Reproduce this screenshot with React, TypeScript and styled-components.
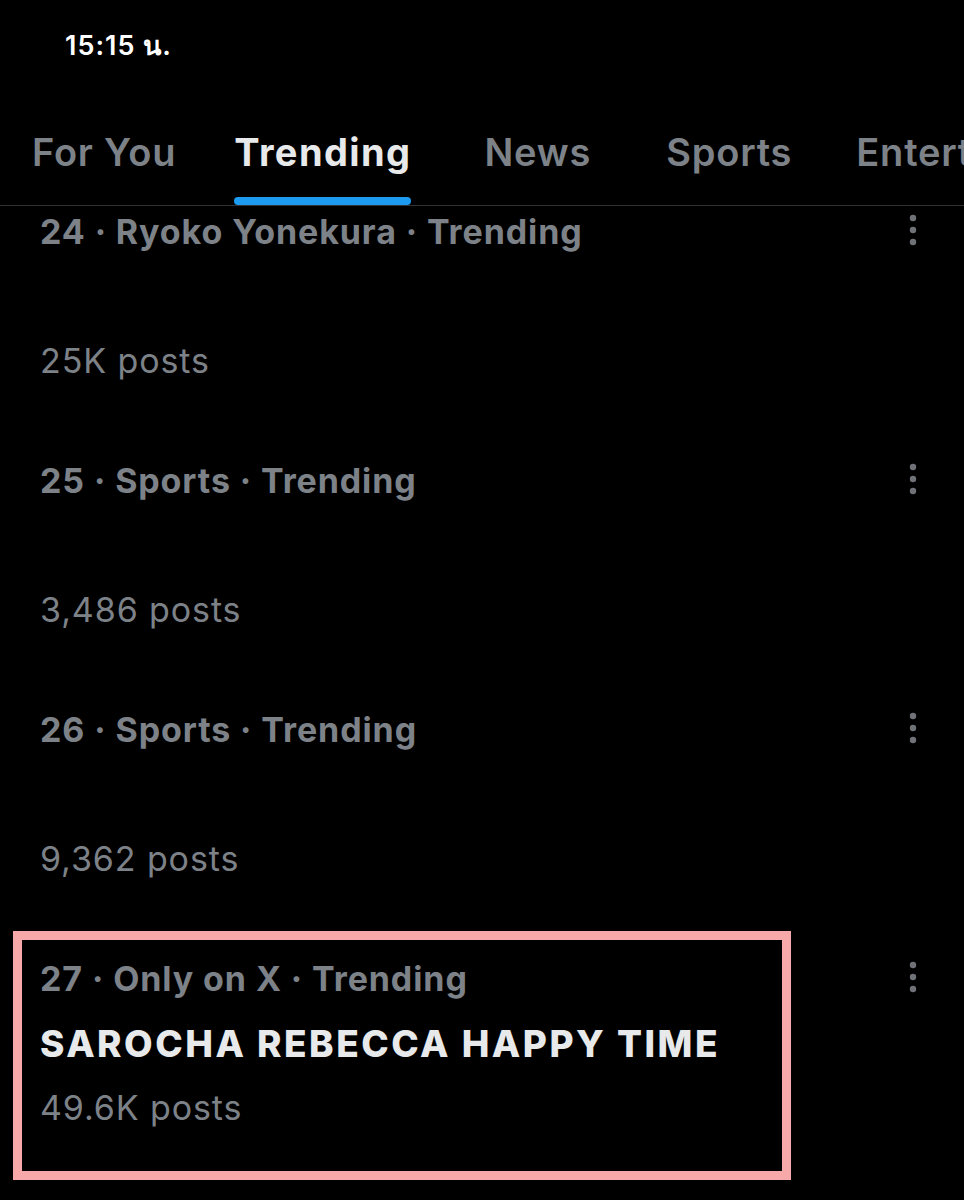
import styled, { createGlobalStyle } from "styled-components";

const GlobalStyle = createGlobalStyle`
  html, body {
    margin: 0;
    padding: 0;
    background: #000;
  }
  body {
    font-family: Inter, "Noto Sans", "Liberation Sans", sans-serif;
    color: #e7e9ea;
  }
`;

const Screen = styled.div`
  width: 964px;
  height: 1200px;
  background: #000;
  overflow: hidden;
`;

const StatusBar = styled.div`
  height: 90px;
  display: flex;
  align-items: center;
  padding-left: 65px;
  font-size: 27px;
  font-weight: 600;
  letter-spacing: 1px;
  color: #fff;
`;

const TabBar = styled.nav`
  height: 115px;
  display: flex;
  align-items: stretch;
  padding-left: 32px;
  border-bottom: 1px solid #2f3336;
  overflow: hidden;
  white-space: nowrap;
`;

const Tab = styled.div<{ $active?: boolean; $gap: number }>`
  position: relative;
  display: flex;
  align-items: center;
  margin-left: ${(p) => p.$gap}px;
  padding-top: 8px;
  font-size: 38px;
  font-weight: ${(p) => (p.$active ? 700 : 600)};
  color: ${(p) => (p.$active ? "#e7e9ea" : "#7d8288")};
  letter-spacing: ${(p) => (p.$active ? 1.4 : 0.8)}px;
`;

const Indicator = styled.span`
  position: absolute;
  left: 0;
  right: 0;
  bottom: 0;
  height: 8px;
  border-radius: 4px;
  background: #1d9bf0;
`;

const List = styled.div`
  display: flex;
  flex-direction: column;
`;

const Row = styled.div`
  position: relative;
  display: flex;
  justify-content: space-between;
  height: 249px;
  padding: 0 47px 0 40px;
  box-sizing: border-box;
`;

const Content = styled.div`
  display: flex;
  flex-direction: column;
  white-space: nowrap;
`;

const Meta = styled.div`
  height: 52px;
  line-height: 52px;
  font-size: 34px;
  font-weight: 700;
  letter-spacing: 0.9px;
  color: #7d8288;
`;

const Title = styled.div`
  height: 64px;
  line-height: 64px;
  margin-top: 7px;
  font-size: 37px;
  font-weight: 800;
  letter-spacing: 2.5px;
  color: #e7e9ea;
`;

const Posts = styled.div`
  height: 64px;
  line-height: 64px;
  font-size: 34px;
  font-weight: 400;
  letter-spacing: 0.9px;
  color: #7d8288;
`;

const Kebab = styled.svg`
  margin-top: 8px;
  flex-shrink: 0;
`;

const Highlight = styled.div`
  position: absolute;
  left: 13px;
  top: -22px;
  width: 778px;
  height: 249px;
  box-sizing: border-box;
  border: 9px solid #f7a9a9;
  pointer-events: none;
`;

type Trend = {
  rank: number;
  context: string;
  title?: string;
  posts: string;
  highlighted?: boolean;
};

const trends: Trend[] = [
  { rank: 24, context: "Ryoko Yonekura", posts: "25K posts" },
  { rank: 25, context: "Sports", posts: "3,486 posts" },
  { rank: 26, context: "Sports", posts: "9,362 posts" },
  {
    rank: 27,
    context: "Only on X",
    title: "SAROCHA REBECCA HAPPY TIME",
    posts: "49.6K posts",
    highlighted: true,
  },
];

const tabs = [
  { label: "For You", gap: 0 },
  { label: "Trending", gap: 58 },
  { label: "News", gap: 73 },
  { label: "Sports", gap: 75 },
  { label: "Entertainment", gap: 64 },
];

function MoreIcon() {
  return (
    <Kebab width="8" height="32" viewBox="0 0 8 32">
      <circle cx="4" cy="4" r="3.2" fill="#6f7377" />
      <circle cx="4" cy="16" r="3.2" fill="#6f7377" />
      <circle cx="4" cy="28" r="3.2" fill="#6f7377" />
    </Kebab>
  );
}

export default function App() {
  return (
    <Screen>
      <GlobalStyle />
      <StatusBar>15:15 น.</StatusBar>
      <TabBar>
        {tabs.map((t) => (
          <Tab key={t.label} $gap={t.gap} $active={t.label === "Trending"}>
            {t.label}
            {t.label === "Trending" && <Indicator />}
          </Tab>
        ))}
      </TabBar>
      <List>
        {trends.map((tr) => (
          <Row key={tr.rank}>
            <Content>
              <Meta>
                {tr.rank} · {tr.context} · Trending
              </Meta>
              <Title>{tr.title ?? ""}</Title>
              <Posts>{tr.posts}</Posts>
            </Content>
            <MoreIcon />
            {tr.highlighted && <Highlight />}
          </Row>
        ))}
      </List>
    </Screen>
  );
}
